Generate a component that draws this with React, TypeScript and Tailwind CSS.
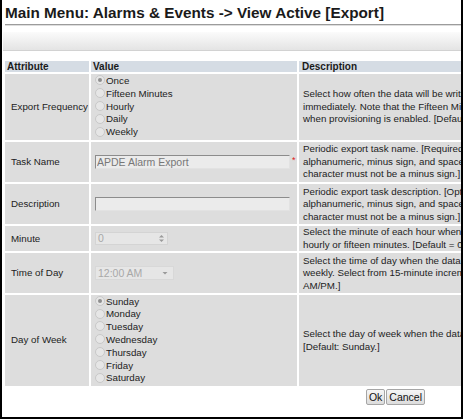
import React from "react";

type RadioProps = { label: string; checked?: boolean };

function Radio({ label, checked }: RadioProps) {
  return (
    <div className="flex h-[12.8px] items-center">
      <span className="mr-[1px] flex h-[10px] w-[10px] shrink-0 -translate-y-[1px] items-center justify-center rounded-full border border-[#c8c8c8] bg-[#e6e6e6]">
        {checked && <span className="h-[4px] w-[4px] rounded-full bg-[#8e8e8e]" />}
      </span>
      <span className="whitespace-nowrap">{label}</span>
    </div>
  );
}

function Desc({ lines, tight }: { lines: string[]; tight?: boolean }) {
  return (
    <td className={tight ? "bg-[#dddddd] py-0 pl-[4px] align-middle leading-[12.4px]" : "bg-[#dddddd] py-[1.5px] pl-[4px] align-middle leading-[12.4px]"}>
      {lines.map((l) => (
        <div key={l} className="whitespace-nowrap">
          {l}
        </div>
      ))}
    </td>
  );
}

function Label({ children }: { children: React.ReactNode }) {
  return <td className="bg-[#dddddd] pl-[6px] align-middle whitespace-nowrap">{children}</td>;
}

export default function App() {
  return (
    <div className="h-[419px] w-[463px] overflow-hidden border-x-2 border-b-2 border-black bg-white font-['Liberation_Sans',Arial,sans-serif] text-[9.75px] text-[#222]">
      <h1 className="whitespace-nowrap pl-[3px] pt-[4px] text-[15.3px] font-bold leading-[18px] text-[#1a1a1a]">
        Main Menu: Alarms &amp; Events -&gt; View Active [Export]
      </h1>
      <div className="ml-[3px] mt-[2px] h-[2px] border-t border-b border-t-[#9c9c9c] border-b-[#dedede]" />

      {/* toolbar band */}
      <div className="ml-[1px] mt-[6px] h-[19px] border-b border-[#d2d2d2] bg-gradient-to-b from-[#fbfbfb] to-[#e4e4e4]" />

      <table className="ml-[1px] mt-[8px] w-[820px] table-fixed border-separate border-spacing-[2px]">
        <colgroup>
          <col className="w-[84px]" />
          <col className="w-[206px]" />
          <col />
        </colgroup>
        <thead>
          <tr className="h-[11px] text-left text-[10px] font-bold leading-[11px] text-[#1a1a1a]">
            <th className="bg-[#d5dce4] pl-[2px] font-bold">Attribute</th>
            <th className="bg-[#d5dce4] pl-[2px] font-bold">Value</th>
            <th className="bg-[#d5dce4] pl-[3px] font-bold">Description</th>
          </tr>
        </thead>
        <tbody>
          <tr>
            <Label>Export Frequency</Label>
            <td className="bg-[#dddddd] py-[1px] pl-[4px] align-middle">
              <Radio label="Once" checked />
              <Radio label="Fifteen Minutes" />
              <Radio label="Hourly" />
              <Radio label="Daily" />
              <Radio label="Weekly" />
            </td>
            <Desc
              lines={[
                "Select how often the data will be written to the export file. Once exports",
                "immediately. Note that the Fifteen Minutes option is available only",
                "when provisioning is enabled. [Default: Once.]",
              ]}
            />
          </tr>
          <tr>
            <Label>Task Name</Label>
            <td className="bg-[#dddddd] pl-[4px] align-middle">
              <div className="flex items-center">
                <input
                  readOnly
                  value="APDE Alarm Export"
                  className="h-[14px] w-[195px] border border-b-[#e2e2e2] border-l-[#8c8c8c] border-r-[#e2e2e2] border-t-[#8c8c8c] bg-[#ebebeb] pl-[1px] text-[10.5px] leading-[12px] text-[#777] outline-none"
                />
                <span className="ml-[2px] -translate-y-[1px] text-[9px] text-[#e02020]">*</span>
              </div>
            </td>
            <Desc
              lines={[
                "Periodic export task name. [Required. Up to 32 characters:",
                "alphanumeric, minus sign, and space. The first",
                "character must not be a minus sign.]",
              ]}
            />
          </tr>
          <tr>
            <Label>Description</Label>
            <td className="bg-[#dddddd] pl-[4px] align-middle">
              <input
                readOnly
                value=""
                className="h-[14px] w-[195px] border border-b-[#e2e2e2] border-l-[#8c8c8c] border-r-[#e2e2e2] border-t-[#8c8c8c] bg-[#ebebeb] text-[10.5px] outline-none"
              />
            </td>
            <Desc
              lines={[
                "Periodic export task description. [Optional. Up to 64 characters:",
                "alphanumeric, minus sign, and space. The first",
                "character must not be a minus sign.]",
              ]}
            />
          </tr>
          <tr>
            <Label>Minute</Label>
            <td className="bg-[#dddddd] pl-[4px] align-middle">
              <div className="flex h-[13px] w-[73px] items-center border border-[#d4d4d4] bg-[#e6e6e6]">
                <span className="flex-1 pl-[2px] text-[10.5px] leading-[11px] text-[#a8a8a8]">0</span>
                <svg width="9" height="11" viewBox="0 0 9 11" className="mr-[1px]">
                  <path d="M2 4.5 L4.5 2 L7 4.5 Z" fill="#9a9a9a" />
                  <path d="M2 6.5 L4.5 9 L7 6.5 Z" fill="#9a9a9a" />
                </svg>
              </div>
            </td>
            <Desc
              tight
              lines={[
                "Select the minute of each hour when the data is exported for",
                "hourly or fifteen minutes. [Default = 0.]",
              ]}
            />
          </tr>
          <tr>
            <Label>Time of Day</Label>
            <td className="bg-[#dddddd] pl-[4px] align-middle">
              <div className="flex h-[14px] w-[79px] items-center border border-[#d8d8d8] bg-[#e6e6e6]">
                <span className="flex-1 pl-[2px] text-[10.5px] leading-[12px] text-[#a8a8a8]">12:00 AM</span>
                <svg width="8" height="8" viewBox="0 0 8 8" className="mr-[4px]">
                  <path d="M1.5 3 L4 5.5 L6.5 3 Z" fill="#9a9a9a" />
                </svg>
              </div>
            </td>
            <Desc
              lines={[
                "Select the time of day when the data is exported for daily or",
                "weekly. Select from 15-minute increments in 12-hour",
                "AM/PM.]",
              ]}
            />
          </tr>
          <tr>
            <Label>Day of Week</Label>
            <td className="bg-[#dddddd] pt-0 pb-[1px] pl-[4px] align-middle">
              <Radio label="Sunday" checked />
              <Radio label="Monday" />
              <Radio label="Tuesday" />
              <Radio label="Wednesday" />
              <Radio label="Thursday" />
              <Radio label="Friday" />
              <Radio label="Saturday" />
            </td>
            <Desc
              lines={[
                "Select the day of week when the data is exported for weekly.",
                "[Default: Sunday.]",
              ]}
            />
          </tr>
        </tbody>
      </table>

      <div className="mt-[1px] flex justify-end gap-[1px] pr-[36px]">
        <button className="h-[16px] rounded-[2px] border border-[#a6a6a6] bg-gradient-to-b from-[#f6f6f6] to-[#dcdcdc] px-[2px] text-[10.5px] leading-[13px] text-[#111]">
          Ok
        </button>
        <button className="h-[16px] rounded-[2px] border border-[#a6a6a6] bg-gradient-to-b from-[#f6f6f6] to-[#dcdcdc] px-[2px] text-[10.5px] leading-[13px] text-[#111]">
          Cancel
        </button>
      </div>
    </div>
  );
}
